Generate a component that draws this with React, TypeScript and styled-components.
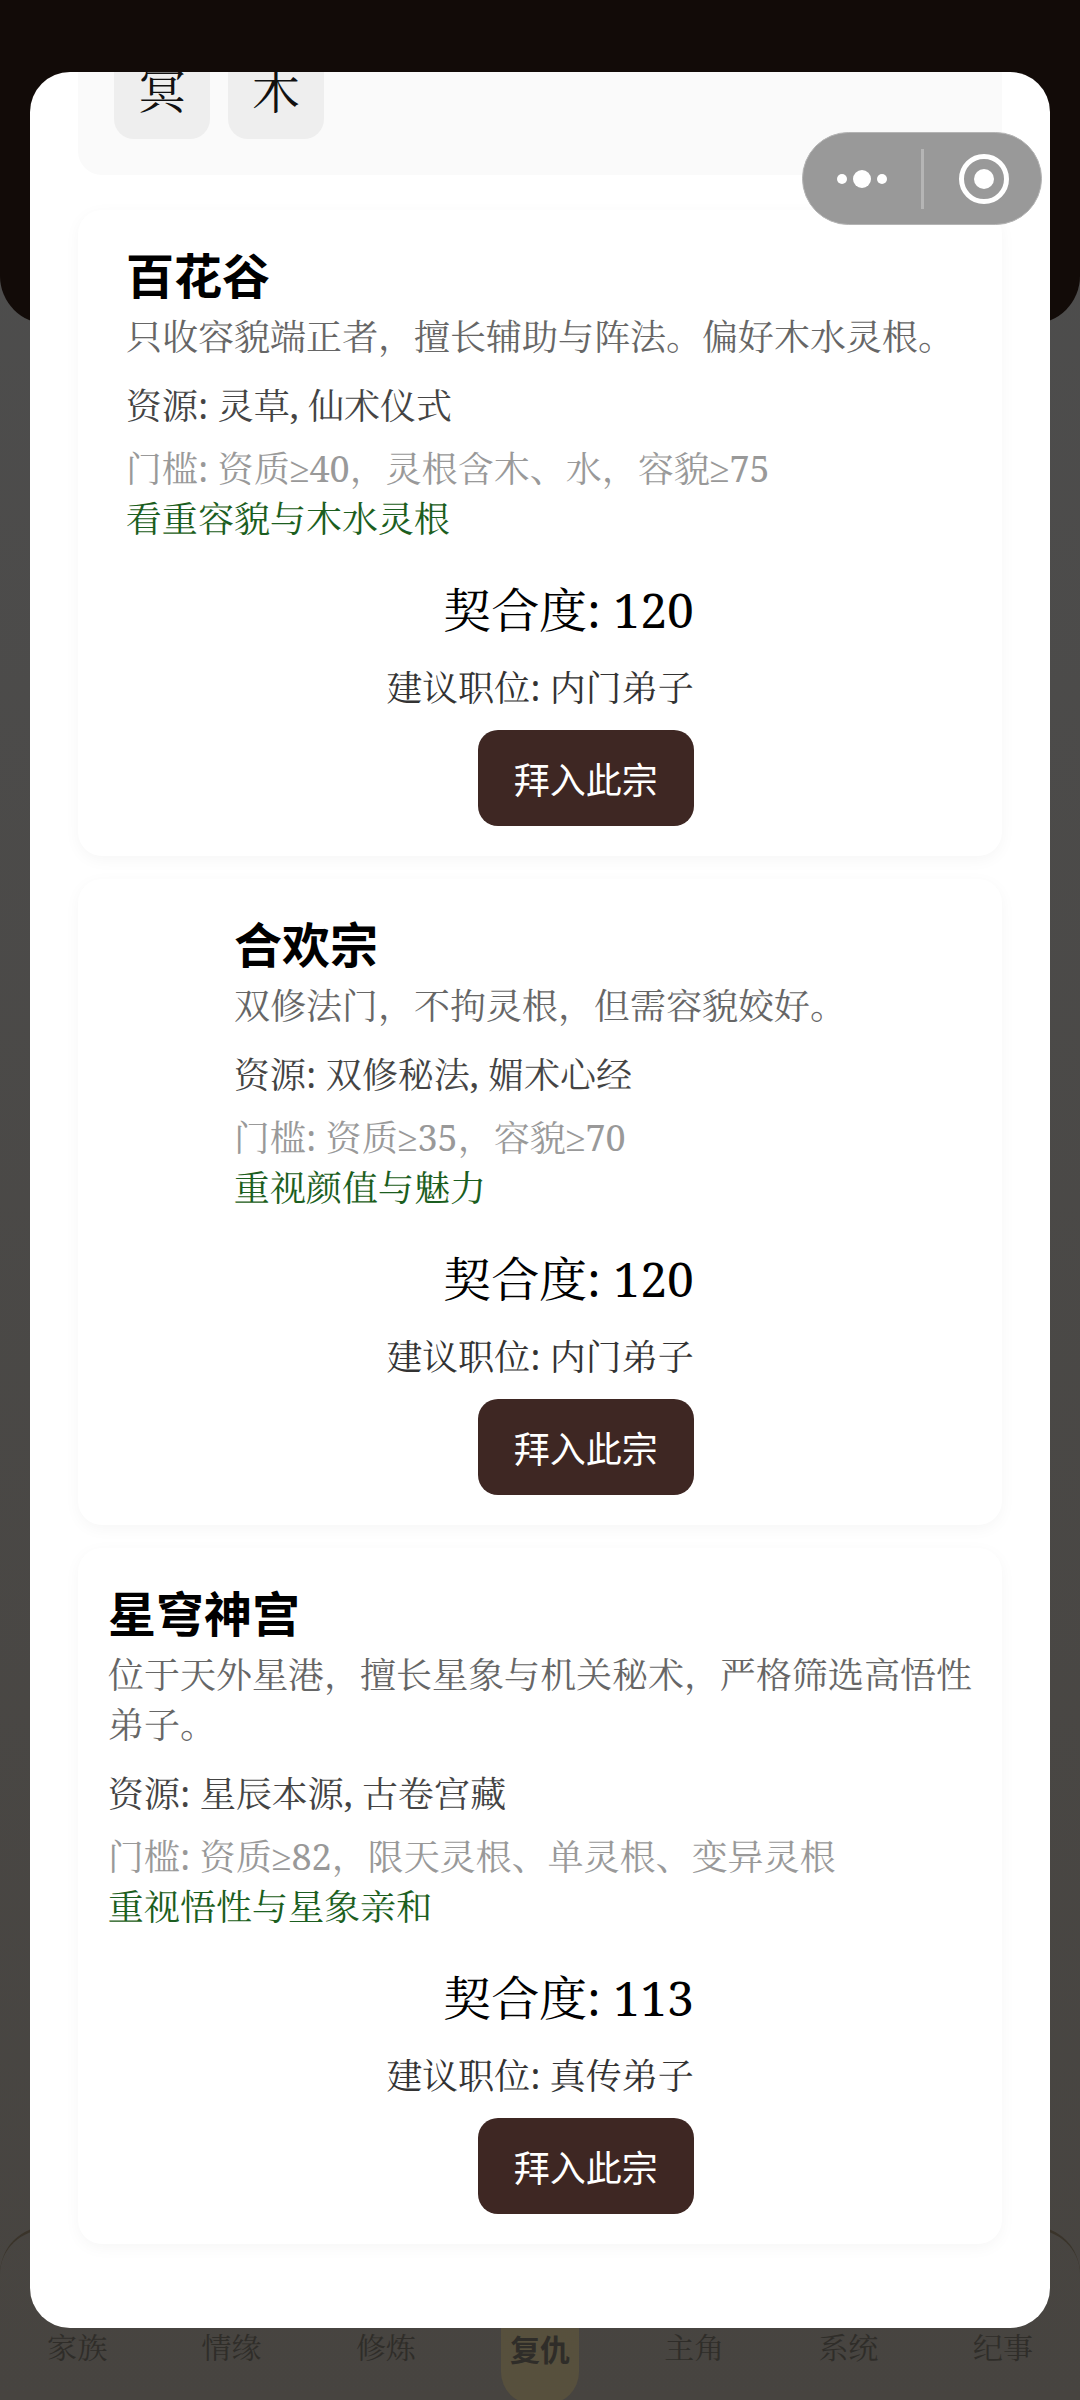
import React from 'react';
import styled, { createGlobalStyle } from 'styled-components';

const GlobalStyle = createGlobalStyle`
  html, body {
    margin: 0;
    padding: 0;
    background: #4c4b48;
    font-family: "Noto Serif", "Liberation Serif", "Noto Serif SC", "Noto Serif CJK SC", serif;
  }
  * { box-sizing: border-box; }
`;

const Page = styled.div`
  position: relative;
  width: 1080px;
  height: 2400px;
  overflow: hidden;
  display: flex;
  flex-direction: column;
  justify-content: space-between;
  background: linear-gradient(#4e4e4e, #474440);
`;

const Header = styled.div`
  height: 324px;
  background: #120b08;
  border-radius: 0 0 48px 48px;
`;

const BottomNav = styled.div`
  height: 174px;
  border-top: 3px solid #3a342a;
  border-radius: 48px 48px 0 0;
  display: grid;
  grid-template-columns: repeat(7, 1fr);
  padding-top: 90px;
`;

const NavItem = styled.div<{ $active?: boolean }>`
  justify-self: center;
  width: 78px;
  height: 85px;
  padding-top: 10px;
  text-align: center;
  font-size: 30px;
  line-height: 38px;
  color: #2f2d29;
  font-family: ${(p) => (p.$active ? '"Noto Sans CJK SC", sans-serif' : 'inherit')};
  font-weight: ${(p) => (p.$active ? 700 : 400)};
  background: ${(p) => (p.$active ? '#57503d' : 'transparent')};
  border-radius: 0 0 32px 32px;
`;

const Overlay = styled.div`
  position: absolute;
  top: 72px;
  left: 30px;
  width: 1020px;
  height: 2256px;
  background: #fff;
  border-radius: 40px;
  overflow: hidden;
  padding: 0 48px;
`;

const TagPanel = styled.div`
  height: 103px;
  margin: 0 0 35px;
  padding: 0 36px 36px;
  background: #fafafa;
  border-radius: 0 0 24px 24px;
  display: flex;
  gap: 18px;
  align-items: flex-end;
`;

const Tag = styled.div`
  width: 96px;
  height: 96px;
  background: #eeeeee;
  border-radius: 20px;
  font-size: 48px;
  line-height: 96px;
  text-align: center;
  color: #111;
`;

const SectList = styled.div`
  display: flex;
  flex-direction: column;
  gap: 23px;
`;

const SectCard = styled.div`
  background: #fff;
  border-radius: 24px;
  box-shadow: 0 4px 16px rgba(0, 0, 0, 0.04);
  padding: 32px 30px 30px;
  display: flex;
  flex-direction: column;
  align-items: center;
`;

const Info = styled.div`
  display: flex;
  flex-direction: column;
`;

const Name = styled.div`
  font-family: "Noto Sans CJK SC", sans-serif;
  font-size: 48px;
  line-height: 62px;
  padding-bottom: 8px;
  font-weight: 700;
  color: #000;
`;

const Desc = styled.div`
  font-size: 36px;
  line-height: 50px;
  color: #666;
`;

const Resource = styled.div`
  margin-top: 19px;
  font-size: 36px;
  line-height: 50px;
  color: #444;
`;

const Threshold = styled.div`
  margin-top: 13px;
  font-size: 36px;
  line-height: 50px;
  color: #999;
`;

const Focus = styled.div`
  font-size: 36px;
  line-height: 50px;
  color: #1b5e20;
`;

const Match = styled.div`
  margin-top: 28px;
  display: flex;
  flex-direction: column;
  align-items: flex-end;
`;

const Score = styled.div`
  font-size: 48px;
  line-height: 76px;
  color: #000;
`;

const Role = styled.div`
  margin-top: 15px;
  font-size: 36px;
  line-height: 50px;
  color: #333;
`;

const JoinButton = styled.button`
  margin-top: 17px;
  width: 216px;
  height: 96px;
  border: none;
  border-radius: 20px;
  background: #3e2723;
  color: #fff;
  font-family: "Noto Sans CJK SC", sans-serif;
  font-size: 36px;
`;

const Capsule = styled.div`
  position: absolute;
  top: 132px;
  left: 802px;
  width: 240px;
  height: 93px;
  border-radius: 47px;
  background: #999;
  border: 1px solid #b4b4b4;
  display: grid;
  grid-template-columns: 1fr 1fr;
  align-items: center;
  justify-items: center;
`;

const CapsuleDivider = styled.div`
  position: absolute;
  left: 118px;
  top: 16px;
  width: 3px;
  height: 60px;
  background: #b5b5b5;
`;

const RecordIcon = styled.svg`
  margin-left: 4px;
`;

const sects = [
  {
    name: '百花谷',
    desc: '只收容貌端正者，擅长辅助与阵法。偏好木水灵根。',
    res: '资源: 灵草, 仙术仪式',
    limit: '门槛: 资质≥40，灵根含木、水，容貌≥75',
    focus: '看重容貌与木水灵根',
    score: 120,
    role: '内门弟子',
  },
  {
    name: '合欢宗',
    desc: '双修法门，不拘灵根，但需容貌姣好。',
    res: '资源: 双修秘法, 媚术心经',
    limit: '门槛: 资质≥35，容貌≥70',
    focus: '重视颜值与魅力',
    score: 120,
    role: '内门弟子',
  },
  {
    name: '星穹神宫',
    desc: '位于天外星港，擅长星象与机关秘术，严格筛选高悟性弟子。',
    res: '资源: 星辰本源, 古卷宫藏',
    limit: '门槛: 资质≥82，限天灵根、单灵根、变异灵根',
    focus: '重视悟性与星象亲和',
    score: 113,
    role: '真传弟子',
  },
];

const navItems = ['家族', '情缘', '修炼', '复仇', '主角', '系统', '纪事'];

export default function App() {
  return (
    <Page lang="zh-CN">
      <GlobalStyle />
      <Header />
      <BottomNav>
        {navItems.map((n) => (
          <NavItem key={n} $active={n === '复仇'}>
            {n}
          </NavItem>
        ))}
      </BottomNav>
      <Overlay>
        <TagPanel>
          <Tag>冥</Tag>
          <Tag>木</Tag>
        </TagPanel>
        <SectList>
          {sects.map((s) => (
            <SectCard key={s.name}>
              <Info>
                <Name>{s.name}</Name>
                <Desc>{s.desc}</Desc>
                <Resource>{s.res}</Resource>
                <Threshold>{s.limit}</Threshold>
                <Focus>{s.focus}</Focus>
              </Info>
              <Match>
                <Score>契合度: {s.score}</Score>
                <Role>建议职位: {s.role}</Role>
                <JoinButton>拜入此宗</JoinButton>
              </Match>
            </SectCard>
          ))}
        </SectList>
      </Overlay>
      <Capsule>
        <svg width="54" height="20" viewBox="0 0 54 20">
          <circle cx="6" cy="10" r="5" fill="#fff" />
          <circle cx="26" cy="10" r="9" fill="#fff" />
          <circle cx="46" cy="10" r="5" fill="#fff" />
        </svg>
        <CapsuleDivider />
        <RecordIcon width="52" height="52" viewBox="0 0 52 52">
          <circle cx="26" cy="26" r="22.5" fill="none" stroke="#fff" strokeWidth="5" />
          <circle cx="26" cy="26" r="10" fill="#fff" />
        </RecordIcon>
      </Capsule>
    </Page>
  );
}
